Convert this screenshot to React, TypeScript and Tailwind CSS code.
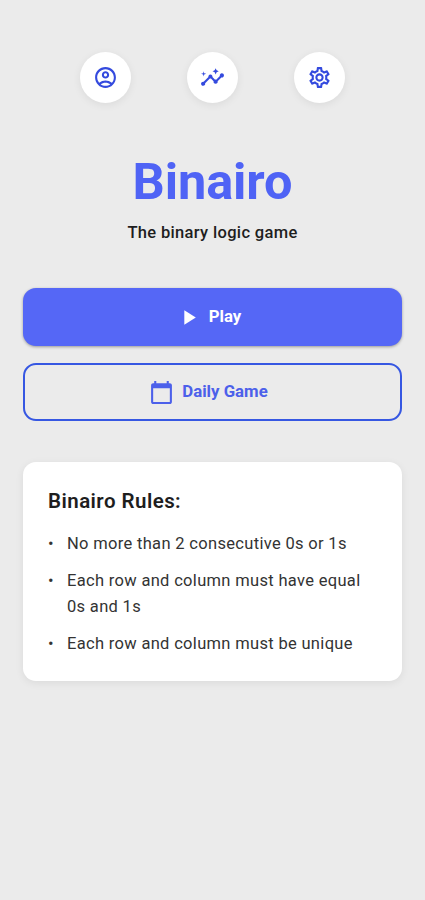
import React from 'react';
import { MdOutlineAccountCircle, MdInsights, MdOutlineSettings, MdPlayArrow, MdCalendarToday } from 'react-icons/md';

const navItems = [
  { id: 'profile', label: 'Profile', Icon: MdOutlineAccountCircle },
  { id: 'stats', label: 'Statistics', Icon: MdInsights },
  { id: 'settings', label: 'Settings', Icon: MdOutlineSettings },
];

const rules = [
  'No more than 2 consecutive 0s or 1s',
  'Each row and column must have equal 0s and 1s',
  'Each row and column must be unique',
];

export default function App() {
  return (
    <div className="min-h-screen bg-[#ebebeb] px-[23px] pt-[52px] font-['Roboto',sans-serif] text-[#1e1e1e]">
      {/* Top navigation */}
      <div className="flex justify-center gap-[56px]">
        {navItems.map(({ id, label, Icon }) => (
          <button
            key={id}
            aria-label={label}
            className="flex h-[51px] w-[51px] items-center justify-center rounded-full bg-white text-[#344ade] shadow-[0_2px_8px_rgba(0,0,0,0.07)]"
          >
            <Icon size={25} />
          </button>
        ))}
      </div>

      {/* Title */}
      <div className="mt-[49px] text-center">
        <h1 className="text-[50.5px] leading-[60px] font-bold tracking-[-0.1px] text-[#4f63f5]">Binairo</h1>
        <p className="mt-[8px] text-[16.5px] leading-[26px] font-medium tracking-[0.33px]">The binary logic game</p>
      </div>

      {/* Actions */}
      <div className="mt-[42px] flex flex-col gap-[17px]">
        <button className="flex h-[58px] items-center justify-center gap-[8px] rounded-[13px] bg-[#5567f6] pr-[8px] text-[16.8px] font-bold text-white shadow-[0_1px_3px_rgba(0,0,0,0.35)]">
          <MdPlayArrow size={25} />
          <span>Play</span>
        </button>
        <button className="flex h-[58px] items-center justify-center gap-[8px] rounded-[13px] border-2 border-[#3657e2] pr-[8px] text-[16.8px] font-bold text-[#4c60ea]">
          <MdCalendarToday size={25} />
          <span>Daily Game</span>
        </button>
      </div>

      {/* Rules card */}
      <div className="mt-[41px] h-[219px] rounded-[13px] bg-white px-[25px] pt-[25px] shadow-[0_2px_8px_rgba(0,0,0,0.07)]">
        <h2 className="text-[20.5px] leading-[28px] font-semibold tracking-[0.45px]">Binairo Rules:</h2>
        <ul className="mt-[16px] flex flex-col gap-[12px] text-[16.5px] leading-[25.3px] tracking-[0.32px] text-[#333]">
          {rules.map((rule) => (
            <li key={rule} className="flex">
              <span className="w-[19px] shrink-0">•</span>
              <span>{rule}</span>
            </li>
          ))}
        </ul>
      </div>
    </div>
  );
}
